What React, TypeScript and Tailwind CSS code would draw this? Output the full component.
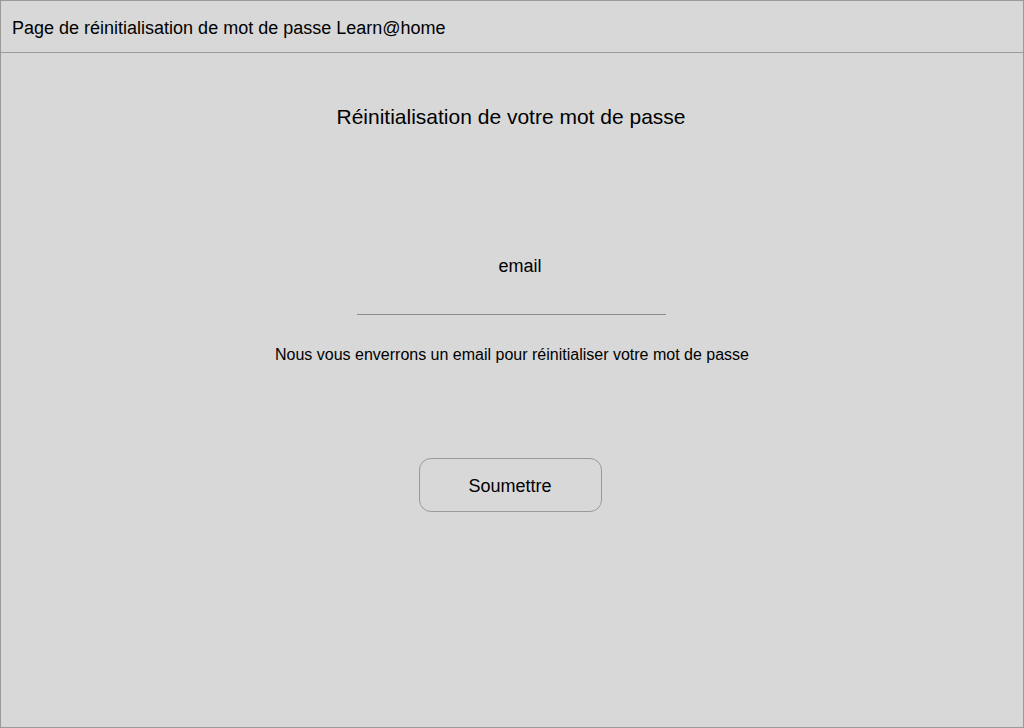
import React from 'react';

const App: React.FC = () => {
  return (
    <div className="w-[1024px] h-[728px] border border-[#9a9a9a] bg-[#d8d8d8] text-black font-['Liberation_Sans',Arial,sans-serif] flex flex-col overflow-hidden">
      <header className="h-[52px] border-b border-[#9a9a9a] flex items-center px-[11px] pt-[2px] shrink-0">
        <span className="text-[18px] leading-[22px]">Page de réinitialisation de mot de passe Learn@home</span>
      </header>

      <main className="flex flex-col items-center">
        <h1 className="mt-[52px] mr-[2px] text-[21px] leading-[24px]">Réinitialisation de votre mot de passe</h1>

        <label className="mt-[126px] ml-[16px] text-[18px] leading-[22px]">email</label>
        <div className="w-[309px] h-[38px] mr-[2px] border-b border-[#8c8c8c]" />

        <p className="mt-[30px] text-[16px] leading-[20px]">
          Nous vous enverrons un email pour réinitialiser votre mot de passe
        </p>

        <button className="mt-[93px] mr-[4px] w-[183px] h-[54px] rounded-[12px] border border-[#9a9a9a] text-[18px] leading-[22px] pt-[2px] flex items-center justify-center">
          Soumettre
        </button>
      </main>
    </div>
  );
};

export default App;
